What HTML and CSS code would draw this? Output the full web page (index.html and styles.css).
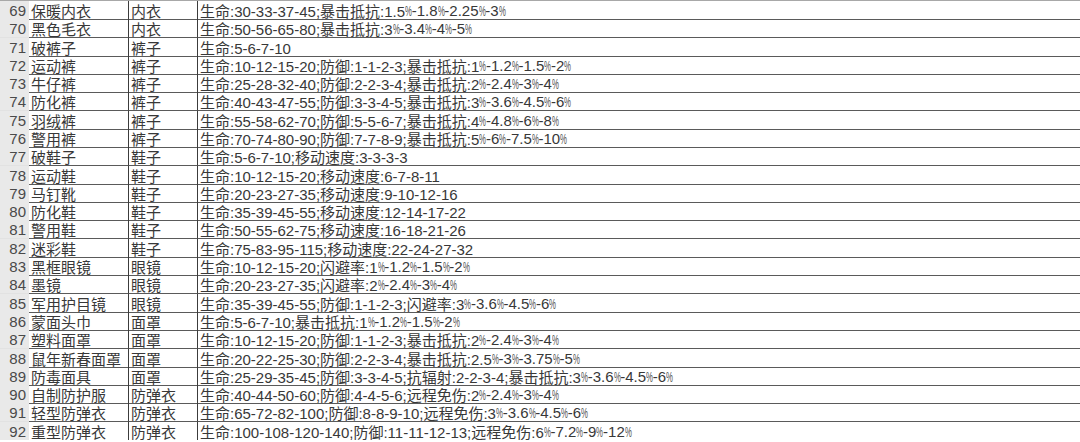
FILE: index.html
```html
<!DOCTYPE html>
<html lang="zh">
<head>
<meta charset="utf-8">
<title>装备表</title>
<link rel="stylesheet" href="styles.css">
</head>
<body>
<div class="sheet">
  <div class="row"><div class="num">69</div><div class="cell">保暖内衣</div><div class="cell">内衣</div><div class="cell desc">生命:30-33-37-45;暴击抵抗:1.5<span class="pc">%</span>-1.8<span class="pc">%</span>-2.25<span class="pc">%</span>-3<span class="pc">%</span></div></div>
  <div class="row"><div class="num">70</div><div class="cell">黑色毛衣</div><div class="cell">内衣</div><div class="cell desc">生命:50-56-65-80;暴击抵抗:3<span class="pc">%</span>-3.4<span class="pc">%</span>-4<span class="pc">%</span>-5<span class="pc">%</span></div></div>
  <div class="row"><div class="num">71</div><div class="cell">破裤子</div><div class="cell">裤子</div><div class="cell desc">生命:5-6-7-10</div></div>
  <div class="row"><div class="num">72</div><div class="cell">运动裤</div><div class="cell">裤子</div><div class="cell desc">生命:10-12-15-20;防御:1-1-2-3;暴击抵抗:1<span class="pc">%</span>-1.2<span class="pc">%</span>-1.5<span class="pc">%</span>-2<span class="pc">%</span></div></div>
  <div class="row"><div class="num">73</div><div class="cell">牛仔裤</div><div class="cell">裤子</div><div class="cell desc">生命:25-28-32-40;防御:2-2-3-4;暴击抵抗:2<span class="pc">%</span>-2.4<span class="pc">%</span>-3<span class="pc">%</span>-4<span class="pc">%</span></div></div>
  <div class="row"><div class="num">74</div><div class="cell">防化裤</div><div class="cell">裤子</div><div class="cell desc">生命:40-43-47-55;防御:3-3-4-5;暴击抵抗:3<span class="pc">%</span>-3.6<span class="pc">%</span>-4.5<span class="pc">%</span>-6<span class="pc">%</span></div></div>
  <div class="row"><div class="num">75</div><div class="cell">羽绒裤</div><div class="cell">裤子</div><div class="cell desc">生命:55-58-62-70;防御:5-5-6-7;暴击抵抗:4<span class="pc">%</span>-4.8<span class="pc">%</span>-6<span class="pc">%</span>-8<span class="pc">%</span></div></div>
  <div class="row"><div class="num">76</div><div class="cell">警用裤</div><div class="cell">裤子</div><div class="cell desc">生命:70-74-80-90;防御:7-7-8-9;暴击抵抗:5<span class="pc">%</span>-6<span class="pc">%</span>-7.5<span class="pc">%</span>-10<span class="pc">%</span></div></div>
  <div class="row"><div class="num">77</div><div class="cell">破鞋子</div><div class="cell">鞋子</div><div class="cell desc">生命:5-6-7-10;移动速度:3-3-3-3</div></div>
  <div class="row"><div class="num">78</div><div class="cell">运动鞋</div><div class="cell">鞋子</div><div class="cell desc">生命:10-12-15-20;移动速度:6-7-8-11</div></div>
  <div class="row"><div class="num">79</div><div class="cell">马钉靴</div><div class="cell">鞋子</div><div class="cell desc">生命:20-23-27-35;移动速度:9-10-12-16</div></div>
  <div class="row"><div class="num">80</div><div class="cell">防化鞋</div><div class="cell">鞋子</div><div class="cell desc">生命:35-39-45-55;移动速度:12-14-17-22</div></div>
  <div class="row"><div class="num">81</div><div class="cell">警用鞋</div><div class="cell">鞋子</div><div class="cell desc">生命:50-55-62-75;移动速度:16-18-21-26</div></div>
  <div class="row"><div class="num">82</div><div class="cell">迷彩鞋</div><div class="cell">鞋子</div><div class="cell desc">生命:75-83-95-115;移动速度:22-24-27-32</div></div>
  <div class="row"><div class="num">83</div><div class="cell">黑框眼镜</div><div class="cell">眼镜</div><div class="cell desc">生命:10-12-15-20;闪避率:1<span class="pc">%</span>-1.2<span class="pc">%</span>-1.5<span class="pc">%</span>-2<span class="pc">%</span></div></div>
  <div class="row"><div class="num">84</div><div class="cell">墨镜</div><div class="cell">眼镜</div><div class="cell desc">生命:20-23-27-35;闪避率:2<span class="pc">%</span>-2.4<span class="pc">%</span>-3<span class="pc">%</span>-4<span class="pc">%</span></div></div>
  <div class="row"><div class="num">85</div><div class="cell">军用护目镜</div><div class="cell">眼镜</div><div class="cell desc">生命:35-39-45-55;防御:1-1-2-3;闪避率:3<span class="pc">%</span>-3.6<span class="pc">%</span>-4.5<span class="pc">%</span>-6<span class="pc">%</span></div></div>
  <div class="row"><div class="num">86</div><div class="cell">蒙面头巾</div><div class="cell">面罩</div><div class="cell desc">生命:5-6-7-10;暴击抵抗:1<span class="pc">%</span>-1.2<span class="pc">%</span>-1.5<span class="pc">%</span>-2<span class="pc">%</span></div></div>
  <div class="row"><div class="num">87</div><div class="cell">塑料面罩</div><div class="cell">面罩</div><div class="cell desc">生命:10-12-15-20;防御:1-1-2-3;暴击抵抗:2<span class="pc">%</span>-2.4<span class="pc">%</span>-3<span class="pc">%</span>-4<span class="pc">%</span></div></div>
  <div class="row"><div class="num">88</div><div class="cell">鼠年新春面罩</div><div class="cell">面罩</div><div class="cell desc">生命:20-22-25-30;防御:2-2-3-4;暴击抵抗:2.5<span class="pc">%</span>-3<span class="pc">%</span>-3.75<span class="pc">%</span>-5<span class="pc">%</span></div></div>
  <div class="row"><div class="num">89</div><div class="cell">防毒面具</div><div class="cell">面罩</div><div class="cell desc">生命:25-29-35-45;防御:3-3-4-5;抗辐射:2-2-3-4;暴击抵抗:3<span class="pc">%</span>-3.6<span class="pc">%</span>-4.5<span class="pc">%</span>-6<span class="pc">%</span></div></div>
  <div class="row"><div class="num">90</div><div class="cell">自制防护服</div><div class="cell">防弹衣</div><div class="cell desc">生命:40-44-50-60;防御:4-4-5-6;远程免伤:2<span class="pc">%</span>-2.4<span class="pc">%</span>-3<span class="pc">%</span>-4<span class="pc">%</span></div></div>
  <div class="row"><div class="num">91</div><div class="cell">轻型防弹衣</div><div class="cell">防弹衣</div><div class="cell desc">生命:65-72-82-100;防御:8-8-9-10;远程免伤:3<span class="pc">%</span>-3.6<span class="pc">%</span>-4.5<span class="pc">%</span>-6<span class="pc">%</span></div></div>
  <div class="row"><div class="num">92</div><div class="cell">重型防弹衣</div><div class="cell">防弹衣</div><div class="cell desc">生命:100-108-120-140;防御:11-11-12-13;远程免伤:6<span class="pc">%</span>-7.2<span class="pc">%</span>-9<span class="pc">%</span>-12<span class="pc">%</span></div></div>
</div>
</body>
</html>
```

FILE: styles.css
```css
html, body {
  margin: 0;
  padding: 0;
  background: #ffffff;
  overflow: hidden;
}

.sheet {
  width: 1080px;
  height: 440px;
  display: grid;
  grid-template-rows: repeat(24, 1fr);
  border-top: 1px solid #a8a8a8;
  box-sizing: border-box;
  font-family: "Liberation Sans", "Noto Sans CJK SC", sans-serif;
  font-size: 15px;
  color: #383838;
}

.row {
  display: grid;
  grid-template-columns: 29px 100px 69px 1fr;
  min-height: 0;
}

.num {
  background: #e9e9e9;
  color: #4a4a4a;
  padding-right: 3px;
  border-bottom: 1px solid #e2e2e2;
  display: flex;
  align-items: center;
  justify-content: flex-end;
  padding-top: 1px;
}

.cell {
  border-right: 1px solid #3c3c3c;
  border-bottom: 1px solid #5a5a5a;
  padding-left: 2px;
  padding-top: 1px;
  display: flex;
  align-items: center;
  white-space: nowrap;
  overflow: hidden;
}

.cell.desc {
  border-right: none;
}

.pc {
  display: inline-block;
  width: 6.7px;
  transform: scaleX(0.52);
  transform-origin: 0 50%;
  color: #555555;
}
```
